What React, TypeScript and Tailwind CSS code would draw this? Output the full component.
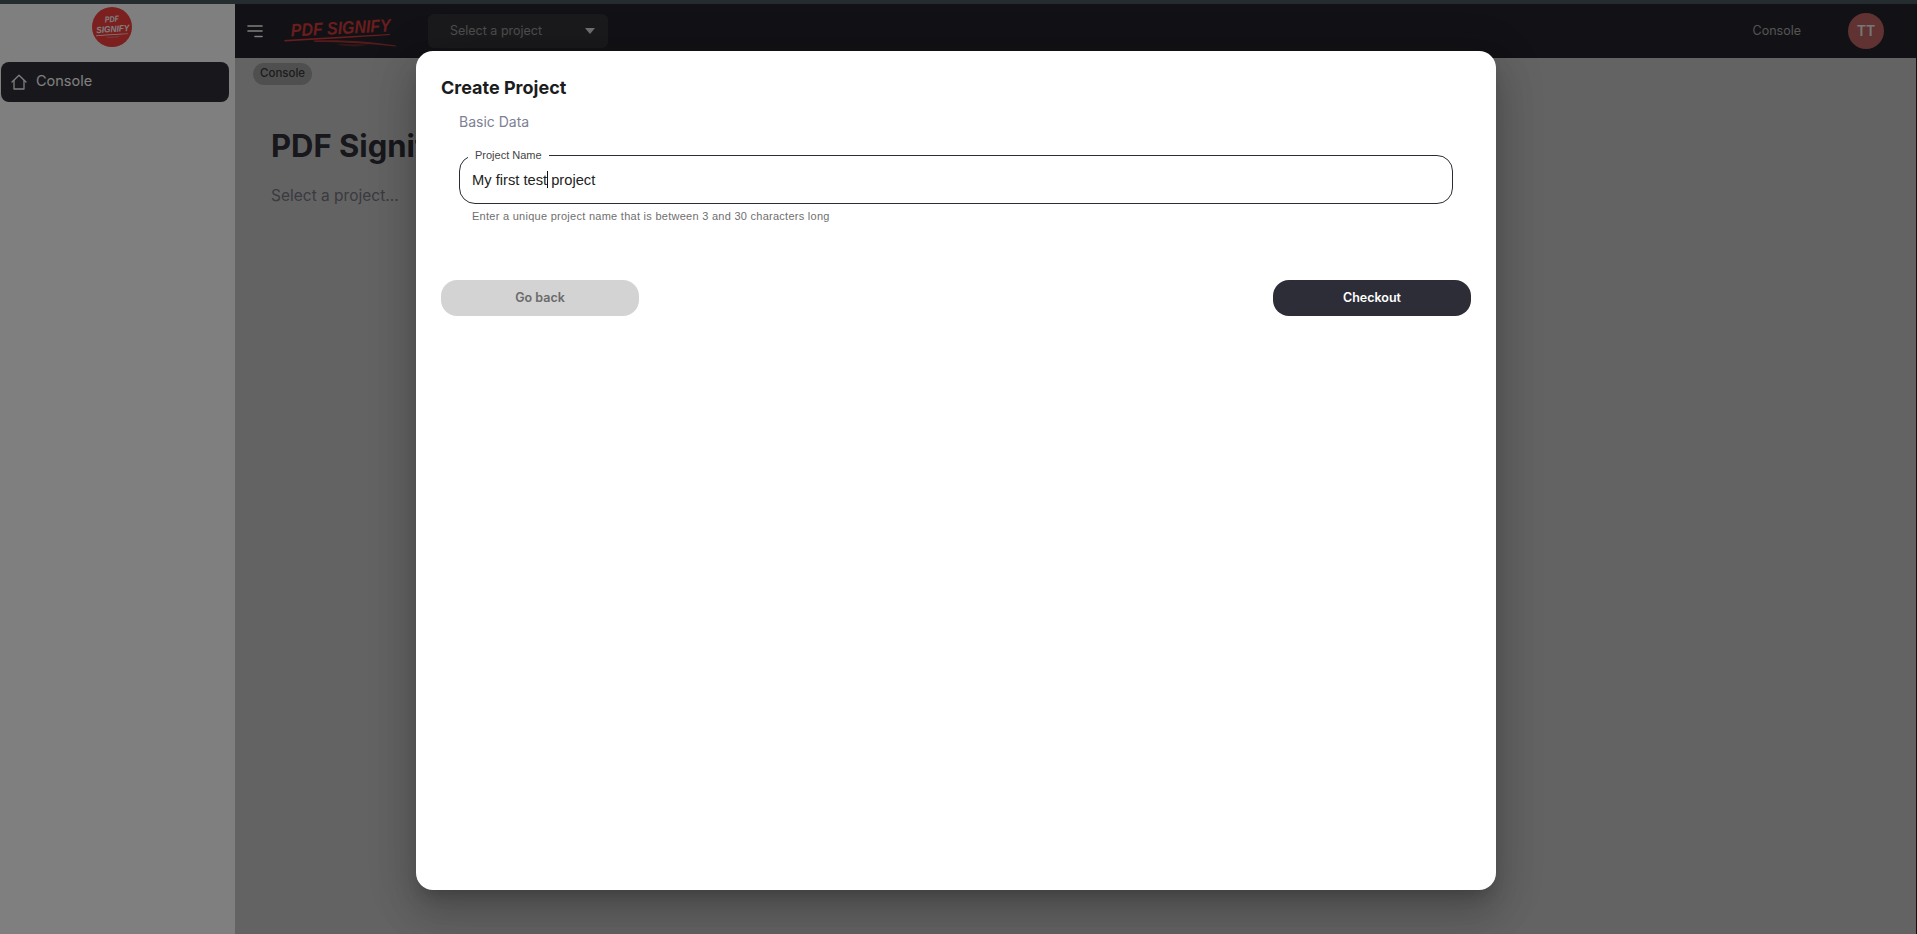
import React from "react";

const inter = "font-['Inter',sans-serif]";
const arial = "font-['Liberation_Sans',Arial,sans-serif]";

function CircleLogo() {
  return (
    <svg width="40" height="40" viewBox="0 0 40 40" aria-label="PDF Signify logo">
      <circle cx="20" cy="20" r="20" fill="#f83f3f" />
      <g fill="#ffffff" fontFamily="'Liberation Sans', sans-serif" fontWeight="700" fontStyle="italic">
        <text x="20" y="15" fontSize="8.5" textAnchor="middle" textLength="14" lengthAdjust="spacingAndGlyphs" transform="rotate(-4 20 15)">PDF</text>
        <text x="21" y="25" fontSize="9" textAnchor="middle" textLength="33" lengthAdjust="spacingAndGlyphs" transform="rotate(-4 21 25)">SIGNIFY</text>
      </g>
      <path d="M4 28.4 C14 27.2 26 26.8 36 26.4 L36 27.1 C26 27.5 16 28.6 4 29.2 Z" fill="#ffffff" />
      <path d="M14 30 L28 29.4 L26 30.2 L16 30.6 Z" fill="#ffffff" opacity="0.5" />
    </svg>
  );
}

function WideLogo() {
  return (
    <svg width="114" height="34" viewBox="0 0 114 34" aria-label="PDF Signify logo">
      <text x="57" y="20" fill="#d23a3a" fontFamily="'Liberation Sans', sans-serif" fontWeight="700" fontStyle="italic" fontSize="18" textAnchor="middle" textLength="100" lengthAdjust="spacingAndGlyphs" transform="rotate(-3 57 20)">PDF SIGNIFY</text>
      <path d="M0 26 C30 24 70 22 106 20 L106 21 C70 23.5 34 25.5 1 27.6 Z" fill="#d23a3a" />
      <path d="M29 26.5 C60 25.5 90 28 112 31.5 L112 32.6 C90 30 60 28 31 28 Z" fill="#d23a3a" opacity="0.8" />
      <path d="M52 30 L86 30.4 L72 32.6 L58 31.6 Z" fill="#d23a3a" opacity="0.4" />
    </svg>
  );
}

function HomeIcon() {
  return (
    <svg width="16" height="16" viewBox="0 0 16 16" fill="none" stroke="#ffffff" strokeWidth="1.3" strokeLinejoin="round" strokeLinecap="round">
      <path d="M1 8 L8 1.2 L15 8" />
      <path d="M3 6.4 V15 H13 V6.4" />
    </svg>
  );
}

function Hamburger() {
  return (
    <svg width="16" height="13" viewBox="0 0 16 13" fill="none" stroke="#ffffff" strokeWidth="1.6" strokeLinecap="round">
      <path d="M1 1 H15" />
      <path d="M1 6 H15" />
      <path d="M8 11.5 H15" />
    </svg>
  );
}

export default function App() {
  return (
    <div className={`flex h-screen w-full flex-col overflow-hidden bg-[#242c30] ${inter}`}>
      <div className="h-1 shrink-0 bg-[#242c30]" />
      <div className="relative flex min-h-0 flex-1">
        <aside className="flex w-[235px] shrink-0 flex-col bg-white px-px">
          <div className="flex h-[58px] items-start pl-[91px] pt-[3px]">
            <CircleLogo />
          </div>
          <nav className="w-[228px]">
            <div className="flex h-10 items-center gap-[9px] rounded-lg bg-[#303038] pl-[10px] pr-2 text-[14.5px] text-white">
              <HomeIcon />
              <span className="-translate-y-px">Console</span>
            </div>
          </nav>
        </aside>
        <div className="flex min-w-0 flex-1 flex-col border-r border-r-[#202020] bg-[#c7c7c7]">
          <header className="flex h-[54px] shrink-0 items-center bg-[#24242c] pl-3 pr-8">
            <Hamburger />
            <div className="ml-[21px] flex items-center">
              <WideLogo />
            </div>
            <div className="ml-[30px] flex h-[34px] w-[180px] items-center justify-between rounded-md bg-[#35353b] pl-[22px] pr-[13px] text-[12.5px] text-[#9a9a9a]">
              <span>Select a project</span>
              <span className="h-0 w-0 border-x-[5px] border-t-[6px] border-x-transparent border-t-[#dddddd]" />
            </div>
            <div className="ml-auto flex items-center gap-[47px]">
              <span className="text-[12.5px] text-[#a8a8a8]">Console</span>
              <div className="flex h-9 w-9 items-center justify-center rounded-full bg-[#c06565] text-sm font-semibold text-[#eeeeee]">TT</div>
            </div>
          </header>
          <main className="px-[18px] pt-[5px]">
            <span className="flex h-[22px] w-fit items-center rounded-full bg-[#9e9e9e] px-[7px] text-[11.5px] font-medium text-[#383838]">Console</span>
            <div className="pl-[18px]">
              <h1 className="mt-[43px] whitespace-nowrap text-[31px] font-bold leading-9 text-[#2e2e38]">PDF Signify Console</h1>
              <p className="mt-5 text-[15.5px] leading-6 text-[#747480]">Select a project...</p>
            </div>
          </main>
        </div>

        <div className="absolute inset-0 bg-black/50">
          <div className="absolute left-[416px] top-[47px] h-[839px] w-[1080px] rounded-[17px] bg-white px-[25px] pt-[26px] shadow-[0_11px_15px_-7px_rgba(0,0,0,0.2),0_24px_38px_3px_rgba(0,0,0,0.14),0_9px_46px_8px_rgba(0,0,0,0.12)]">
            <h2 className="text-lg font-bold leading-[22px] text-[#1c1c20]">Create Project</h2>
            <div className="px-[18px]">
              <p className="mt-[13px] text-sm leading-5 text-[#7c8193]">Basic Data</p>
              <fieldset className={`mt-4 h-[56px] rounded-2xl border border-[#2c2c34] pl-2 pr-3 ${arial}`}>
                <legend className="px-[7px] text-[11px] leading-[14px] text-[#444444]">Project Name</legend>
                <div className="pl-1 pt-[6px] text-[14.7px] leading-[18px] text-[#222222]">
                  My first test
                  <span className="mx-[-0.5px] inline-block h-[17px] w-px translate-y-[3px] bg-[#111111]" />
                  {" "}project
                </div>
              </fieldset>
              <p className={`ml-[13px] mt-[6px] text-[11px] leading-[13px] tracking-[0.27px] text-[#6f6f6f] ${arial}`}>
                Enter a unique project name that is between 3 and 30 characters long
              </p>
            </div>
            <div className="mt-[57px] flex justify-between">
              <button className="h-9 w-[198px] rounded-2xl bg-[#d3d3d3] text-[12.5px] font-semibold text-[#6b6b6b]">Go back</button>
              <button className="h-9 w-[198px] rounded-2xl bg-[#2d2d38] text-[12.5px] font-semibold text-white">Checkout</button>
            </div>
          </div>
        </div>
      </div>
    </div>
  );
}
